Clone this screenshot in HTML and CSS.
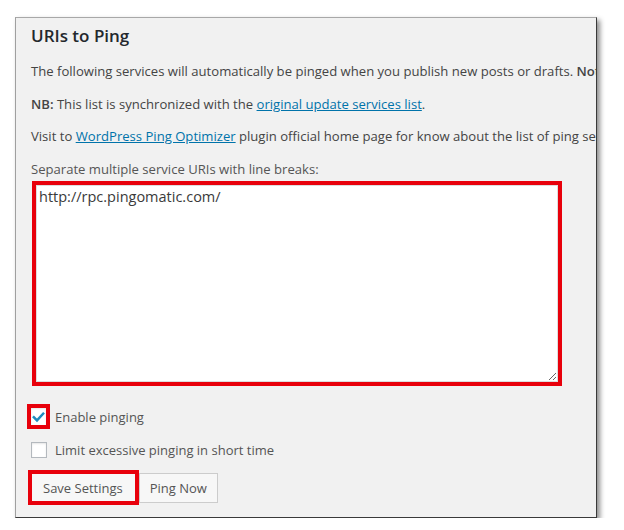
FILE: index.html
```html
<!DOCTYPE html>
<html>
<head>
<meta charset="utf-8">
<link rel="stylesheet" href="styles.css">
</head>
<body>
<div class="panel">
  <h3 class="title">URIs to Ping</h3>
  <p class="txt">The following services will automatically be pinged when you publish new posts or drafts. <b>Not</b> when you edit previously published posts, as WordPress does by default.</p>
  <p class="txt"><b>NB:</b> This list is synchronized with the <a href="#">original update services list</a>.</p>
  <p class="txt">Visit to <a href="#">WordPress Ping Optimizer</a> plugin official home page for know about the list of ping services.</p>
  <p class="txt label">Separate multiple service URIs with line breaks:</p>
  <div class="hl-area"><textarea class="uris">http://rpc.pingomatic.com/</textarea></div>
  <div class="row row-first">
    <span class="hl-check"><span class="cb checked"><svg viewBox="0 0 16 16" width="16" height="16"><path d="M3 8.2 L6.4 11.6 L13 4.4" fill="none" stroke="#1e8cbe" stroke-width="2.6" stroke-linecap="square"/></svg></span></span>
    <span class="lbl first">Enable pinging</span>
  </div>
  <div class="row">
    <span class="cb"></span>
    <span class="lbl">Limit excessive pinging in short time</span>
  </div>
  <div class="buttons">
    <button class="btn save">Save Settings</button>
    <button class="btn">Ping Now</button>
  </div>
</div>
</body>
</html>
```
FILE: styles.css
```css
html, body {
  margin: 0;
  padding: 0;
  background: #ffffff;
}
body {
  font-family: "Open Sans", "Liberation Sans", sans-serif;
  color: #444;
}
.panel {
  margin: 17px 0 0 15px;
  width: 582px;
  box-sizing: border-box;
  background: #f1f1f1;
  border-top: 1px solid #a8a8a8;
  border-left: 1px solid #a0a0a0;
  border-right: 1px solid #3a3a3a;
  border-bottom: 1px solid #3a3a3a;
  box-shadow: 3px 3px 5px rgba(0, 0, 0, 0.45);
  padding: 6px 0 12px 15px;
  overflow: hidden;
}
.title {
  margin: 0 0 14px;
  font-size: 17px;
  line-height: 24px;
  font-weight: 600;
  color: #23282d;
}
.txt {
  margin: 0 0 13px;
  font-size: 13.1px;
  line-height: 19.5px;
  white-space: nowrap;
}
.txt b {
  font-weight: 600;
}
.txt a {
  color: #0073aa;
  text-decoration: underline;
}
.label {
  margin-bottom: 2px;
  color: #555;
}
.hl-area {
  margin-left: 1px;
  width: 530px;
  height: 205px;
  box-sizing: border-box;
  border: 4px solid #e8000b;
  display: flex;
}
.uris {
  flex: 1;
  margin: 0;
  box-sizing: border-box;
  border: 1px solid #dddddd;
  background: #fff;
  padding: 2px 2px;
  font-family: "Open Sans", "Liberation Sans", sans-serif;
  font-size: 14.5px;
  line-height: 1.2;
  color: #3a3a3a;
  resize: vertical;
  outline: none;
}
.row {
  display: flex;
  align-items: center;
  height: 33px;
}
.row-first {
  margin-top: 14px;
}
.hl-check {
  margin-left: -4px;
  border: 4px solid #e8000b;
  display: flex;
}
.cb {
  width: 16px;
  height: 16px;
  box-sizing: border-box;
  border: 1px solid #b4b9be;
  background: #fff;
  box-shadow: inset 0 1px 2px rgba(0, 0, 0, 0.1);
  display: flex;
  align-items: center;
  justify-content: center;
}
.cb.checked {
  width: 15px;
  height: 17px;
  border: none;
}
.lbl {
  margin-left: 8px;
  font-size: 13px;
  color: #555;
}
.lbl.first {
  margin-left: 5px;
}
.buttons {
  display: flex;
  align-items: center;
  margin-left: -3px;
  margin-top: 4px;
}
.btn {
  height: 30px;
  box-sizing: border-box;
  border: 1px solid #cccccc;
  background: #f7f7f7;
  font-family: "Open Sans", "Liberation Sans", sans-serif;
  font-size: 13px;
  color: #555;
  padding: 0 10px;
  margin: 0;
  border-radius: 0;
}
.btn.save {
  height: 35px;
  border: 4px solid #e8000b;
  padding: 0 12px 0 11px;
}
```
